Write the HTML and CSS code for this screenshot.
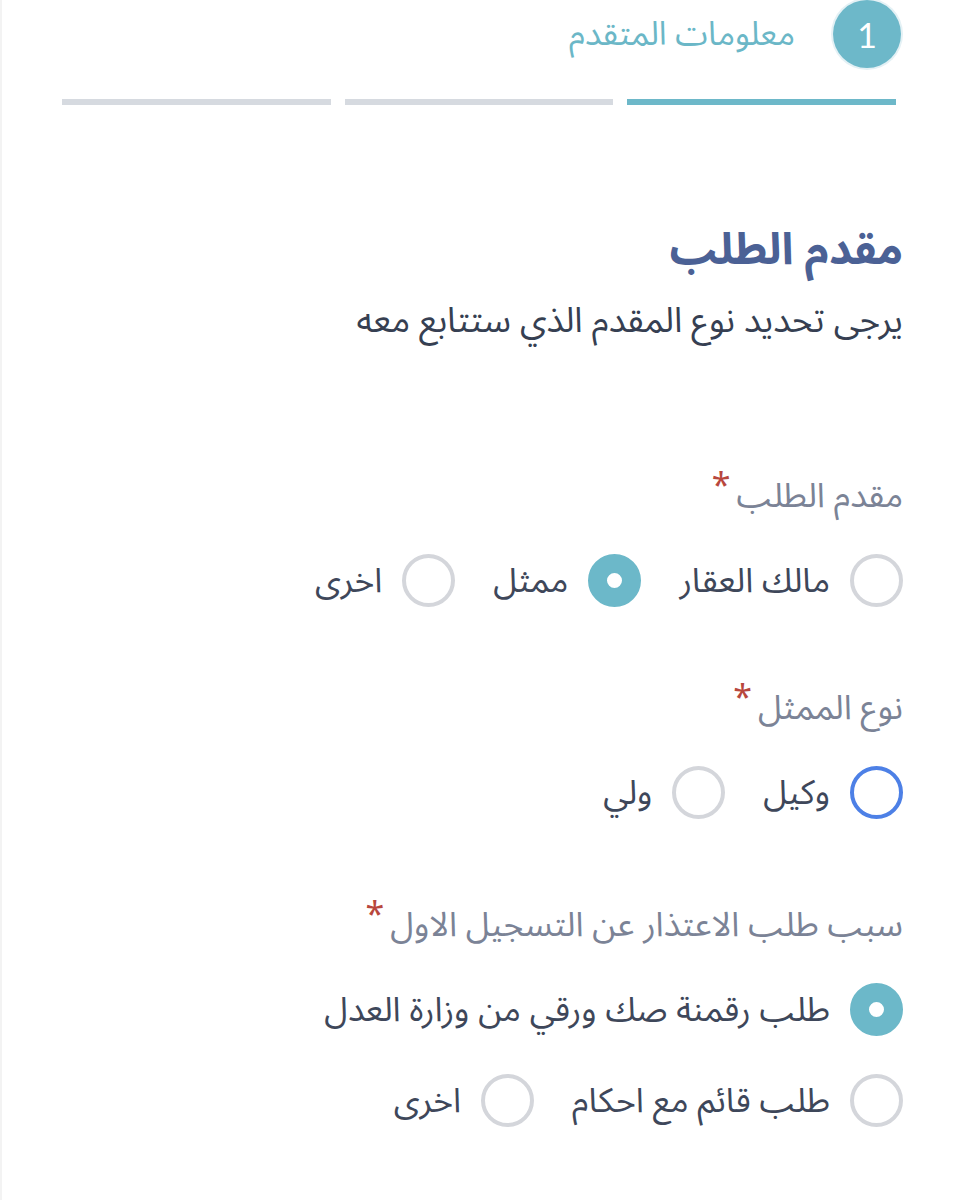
FILE: index.html
```html
<!DOCTYPE html>
<html lang="ar" dir="rtl">
<head>
<meta charset="utf-8">
<link rel="stylesheet" href="styles.css">
</head>
<body>
<div class="page">
  <div class="stepper">
    <div class="step">
      <span class="step-num">1</span>
      <span class="step-title">معلومات المتقدم</span>
    </div>
    <div class="bars">
      <span class="bar active"></span>
      <span class="bar"></span>
      <span class="bar"></span>
    </div>
  </div>

  <h1 class="heading">مقدم الطلب</h1>
  <p class="sub">يرجى تحديد نوع المقدم الذي ستتابع معه</p>

  <div class="field f1">
    <div class="label">مقدم الطلب<span class="req">*</span></div>
    <div class="radios">
      <label class="radio"><span class="dot"></span><span class="txt">مالك العقار</span></label>
      <label class="radio"><span class="dot checked"></span><span class="txt">ممثل</span></label>
      <label class="radio"><span class="dot"></span><span class="txt">اخرى</span></label>
    </div>
  </div>

  <div class="field f2">
    <div class="label">نوع الممثل<span class="req">*</span></div>
    <div class="radios">
      <label class="radio"><span class="dot focus"></span><span class="txt">وكيل</span></label>
      <label class="radio"><span class="dot"></span><span class="txt">ولي</span></label>
    </div>
  </div>

  <div class="field f3">
    <div class="label">سبب طلب الاعتذار عن التسجيل الاول<span class="req">*</span></div>
    <div class="radios">
      <label class="radio"><span class="dot checked"></span><span class="txt">طلب رقمنة صك ورقي من وزارة العدل</span></label>
    </div>
    <div class="radios second">
      <label class="radio"><span class="dot"></span><span class="txt">طلب قائم مع احكام</span></label>
      <label class="radio"><span class="dot"></span><span class="txt">اخرى</span></label>
    </div>
  </div>
</div>
</body>
</html>
```

FILE: styles.css
```css
html, body {
  margin: 0;
  padding: 0;
  background: #ffffff;
}
body {
  font-family: "Noto Sans Arabic", "DejaVu Sans", "Noto Sans", sans-serif;
  direction: rtl;
  color: #3e475a;
}
.page {
  width: 959px;
  height: 1200px;
  box-sizing: border-box;
  padding: 0 56px 0 0;
  border-left: 2px solid #f3f3f3;
  overflow: hidden;
}
.step {
  display: flex;
  align-items: center;
  gap: 38px;
  height: 68px;
}
.step-num {
  width: 68px;
  height: 68px;
  border-radius: 50%;
  background: #6db8c9;
  box-shadow: 0 0 0 2px #e4f1f5;
  color: #fff;
  display: flex;
  align-items: center;
  justify-content: center;
  font-family: "Lato", "Noto Sans", sans-serif;
  font-size: 34px;
  font-weight: 400;
  margin-right: 2px;
}
.step-title {
  color: #6bb7c7;
  font-size: 33px;
  line-height: normal;
}
.bars {
  display: flex;
  gap: 14px;
  margin-top: 31px;
  margin-right: 7px;
  width: 834px;
}
.bar {
  flex: 1;
  height: 6px;
  background: #d6dae0;
}
.bar.active {
  background: #6db8c9;
}
.heading {
  margin: 110px 0 0 0;
  font-size: 44px;
  font-weight: 700;
  color: #4b6195;
  line-height: 70px;
}
.sub {
  margin: 8px 0 0 0;
  font-size: 35px;
  line-height: 56px;
  color: #363f52;
}
.f1 { margin-top: 126px; }
.f2 { margin-top: 80px; }
.f3 { margin-top: 85px; }
.label {
  font-size: 34px;
  line-height: 42px;
  color: #7b8396;
}
.req {
  color: #b8473d;
  margin-right: 6px;
  position: relative;
  top: -10px;
}
.radios {
  display: flex;
  align-items: center;
  gap: 38px;
  margin-top: 37px;
}
.radios.second {
  margin-top: 38px;
}
.radio {
  display: flex;
  align-items: center;
  gap: 20px;
}
.dot {
  width: 53px;
  height: 53px;
  box-sizing: border-box;
  border-radius: 50%;
  border: 4px solid #d4d6db;
  background: #fff;
  flex: none;
}
.dot.checked {
  border: 19px solid #6cb8c9;
  background: #fff;
}
.dot.focus {
  border-color: #4d80e6;
}
.txt {
  font-size: 34px;
  line-height: 52px;
  color: #3e475a;
}
```
